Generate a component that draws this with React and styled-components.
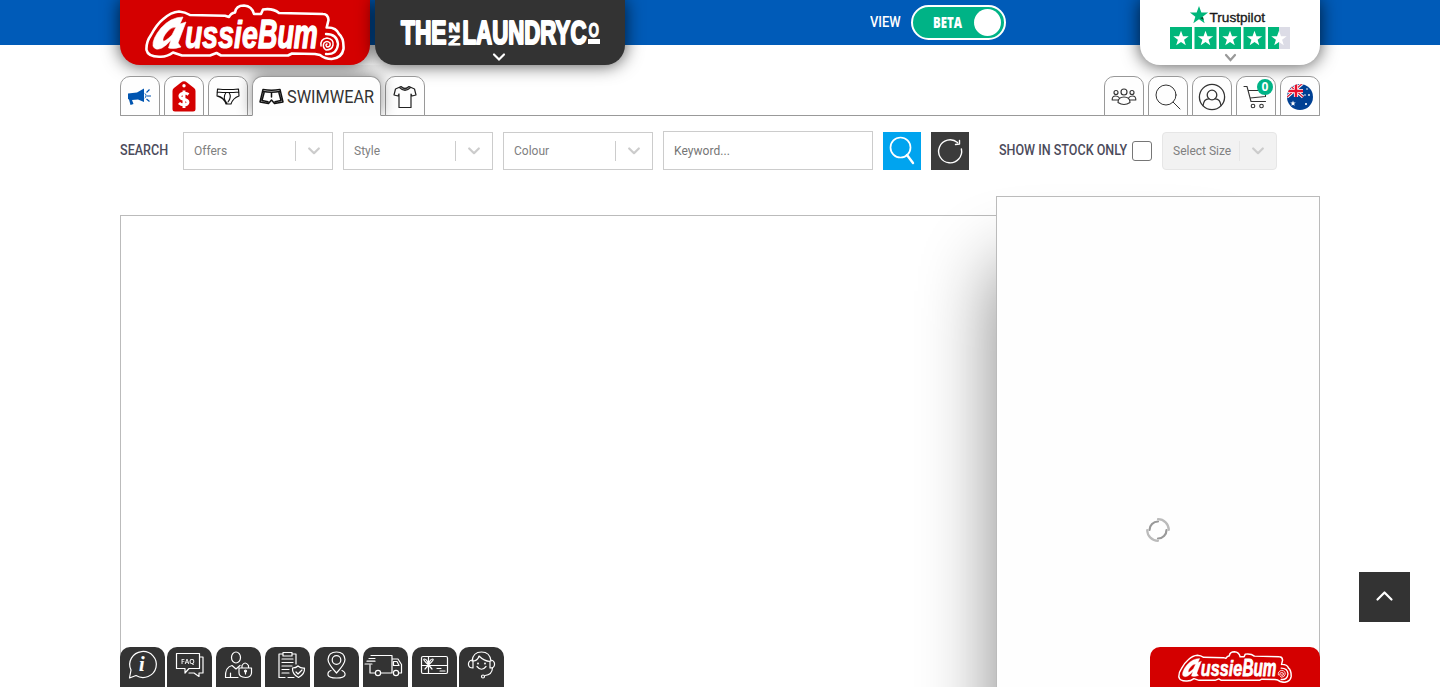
import React from 'react';
import styled, { createGlobalStyle } from 'styled-components';

const Global = createGlobalStyle`
  *, *::before, *::after { box-sizing: border-box; }
  body { margin: 0; background: #fff; font-family: Roboto, "Liberation Sans", sans-serif; color: #333; overflow: hidden; }
  svg { display: block; flex: none; }
`;

const Page = styled.div`
  height: 687px;
  display: flex;
  flex-direction: column;
  overflow: hidden;
`;
const TopBar = styled.header`
  height: 45px;
  flex: none;
  background: #005bb8;
`;
const Container = styled.div`
  width: 1200px;
  margin: 0 auto;
`;
const TopInner = styled(Container)`
  display: flex;
  align-items: flex-start;
`;
const HangingTab = styled.div`
  width: ${p => p.$w}px;
  height: 65px;
  margin-right: ${p => p.$gap || 0}px;
  padding: ${p => p.$pad || 0};
  background: ${p => p.$bg};
  border-radius: 0 0 20px 20px;
  box-shadow: 0 0 18px rgba(0, 0, 0, 0.72);
`;
const Toggle = styled.div`
  display: flex;
  align-items: center;
  height: 45px;
  margin-left: 245px;
  margin-right: 134px;
  color: #fff;
`;
const Switch = styled.div`
  width: 95px;
  height: 35px;
  margin-left: 10px;
  padding: 0 3px 0 20px;
  display: flex;
  align-items: center;
  justify-content: space-between;
  background: #00b386;
  border: 2px solid #fff;
  border-radius: 18px;
`;
const Knob = styled.span`
  width: 27px;
  height: 27px;
  border-radius: 50%;
  background: #fff;
`;
const NavRow = styled(Container)`
  display: flex;
  justify-content: space-between;
  height: 40px;
  margin-top: 31px;
  flex: none;
  border-bottom: 1px solid #999;
  clip-path: inset(-11px -30px 0);
`;
const TabGroup = styled.nav`
  display: flex;
  gap: 4px;
`;
const Tab = styled.a`
  width: ${p => (p.$active ? 129 : 40)}px;
  height: 40px;
  padding-top: 1px;
  display: flex;
  align-items: center;
  justify-content: center;
  gap: 3px;
  position: relative;
  z-index: ${p => (p.$active ? 1 : 0)};
  background: #fefefe;
  border: 1px solid #999;
  border-bottom-color: ${p => (p.$active ? '#fefefe' : '#999')};
  border-radius: 10px 10px 0 0;
  box-shadow: ${p => (p.$active ? '0 -2px 15px rgba(0,0,0,.45)' : 'none')};
`;
const Badge = styled.span`
  position: absolute;
  top: 2px;
  right: 2px;
  width: 16px;
  height: 16px;
  border-radius: 50%;
  background: #00b386;
  color: #fff;
  font: 700 12px/16px "Open Sans", sans-serif;
  text-align: center;
`;
const FilterRow = styled(Container)`
  display: flex;
  align-items: center;
  height: 39px;
  margin-top: 15px;
  flex: none;
`;
const Label = styled.span`
  display: block;
  width: ${p => p.$w}px;
  flex: none;
  font-size: ${p => p.$size || 16}px;
  font-weight: ${p => p.$weight || 500};
  font-family: ${p => p.$font || 'Roboto'}, sans-serif;
  line-height: 20px;
  padding-bottom: ${p => p.$lift || 0}px;
  white-space: nowrap;
  color: ${p => p.$color || '#4c4b5b'};
`;
const Squeeze = styled.span`
  display: inline-block;
  transform: scaleX(${p => p.$x});
  transform-origin: left center;
`;
const Select = styled.div`
  display: flex;
  align-items: center;
  width: ${p => p.$w || 150}px;
  height: 38px;
  margin: 1px 10px 0 0;
  padding-left: 10px;
  border: 1px solid ${p => (p.$disabled ? '#e6e6e6' : '#ccc')};
  border-radius: ${p => (p.$disabled ? 4 : 0)}px;
  background: ${p => (p.$disabled ? '#f2f2f2' : '#fff')};
  font-size: 12px;
  color: #808080;
`;
const SelectText = styled.span`
  flex: 1;
  white-space: nowrap;
`;
const Arrow = styled.span`
  width: 37px;
  height: 20px;
  display: flex;
  align-items: center;
  justify-content: center;
  border-left: 1px solid ${p => (p.$disabled ? '#e6e6e6' : '#ccc')};
`;
const Keyword = styled.div`
  width: 210px;
  height: 39px;
  margin-right: 10px;
  padding-left: 10px;
  border: 1px solid #ccc;
  background: #fff;
  font-size: 12px;
  letter-spacing: 0.05px;
  line-height: 38px;
  color: #757575;
`;
const SquareButton = styled.div`
  width: 38px;
  height: 38px;
  margin: 1px ${p => p.$gap}px 0 0;
  background: ${p => p.$bg};
`;
const Check = styled.span`
  width: 20px;
  height: 20px;
  margin: 1px 10px 0 5px;
  border: 1px solid #767676;
  border-radius: 3px;
  background: #fff;
`;
const Content = styled(Container)`
  display: flex;
  flex: 1;
  margin-top: 26px;
`;
const MainPanel = styled.main`
  flex: 1;
  margin-top: 19px;
  border: solid #bbb;
  border-width: 1px 0 0 1px;
`;
const SidePanel = styled.aside`
  width: 324px;
  height: 668px;
  display: flex;
  align-items: center;
  justify-content: center;
  background: #fefefe;
  border: 1px solid #bbb;
  box-shadow: -50px 20px 75px -50px rgba(0, 0, 0, 0.48);
`;
const Footer = styled.footer`
  position: fixed;
  bottom: 0;
  left: 50%;
  width: 1200px;
  margin-left: -600px;
  display: flex;
`;
const FooterTab = styled.a`
  width: 45px;
  height: 40px;
  margin-right: ${p => p.$gap}px;
  background: #333;
  border-radius: 10px 10px 0 0;
`;
const FooterLogo = styled.div`
  width: 170px;
  height: 40px;
  margin-left: auto;
  padding: 4px 0 0 28px;
  background: #d40000;
  border-radius: 10px 10px 0 0;
`;
const ToTop = styled.button`
  position: fixed;
  right: 30px;
  bottom: 65px;
  width: 51px;
  height: 50px;
  padding: 0;
  border: 0;
  background: #333;
`;
const Line = styled.svg`
  fill: none;
  stroke: ${p => p.$c || '#333'};
  stroke-width: ${p => p.$s || 1.2};
  stroke-linecap: round;
  stroke-linejoin: round;
`;
const BrandText = styled.text`
  font-family: ${p => p.$font || '"Liberation Sans Narrow", "Liberation Sans"'}, sans-serif;
  font-weight: ${p => p.$weight || 700};
  font-style: ${p => (p.$italic ? 'italic' : 'normal')};
  fill: ${p => p.$fill || '#fff'};
  stroke: ${p => p.$fill || '#fff'};
  stroke-width: ${p => p.$stroke || 0};
  stroke-linejoin: round;
`;

const AussieLogo = ({ width }) => (
  <svg width={width} height={width * 0.285} viewBox="0 0 200 57">
    <path d="M1.500 46Q1 38 6 31Q12 20 18 15.300Q26 8 34 7.500Q40 8 45 11L80 11.700L84 13Q86 9 90 8.500Q91 1.500 99 1.500Q107 2 109 10L116 10L118 5.500Q128 4 134 9L178 10Q183 10 183.500 16L181.700 23.500Q191 23 194 30Q199 34 198.500 45Q197 54 186.700 55Q180 55 175 51L170 50L147 49.500L143 51.500L76 51.500L71.500 49L65 51.500L37 51.500L28 48.500Q22 53 15 52.700Q3 53 1.500 46Z" fill="none" stroke="#fff" strokeWidth="2.600" strokeLinejoin="round" />
    <path d="M38 13Q26 13 16 24Q7 35 8 42Q10 47 17 44Q22 41 26 36L23.500 44Q29 45.500 36 43L33 39L41 18L35 20L38 13ZM31 23L27 31Q20 38 18 37Q17 34 22 28Q26 23 31 23Z" fill="#fff" fillRule="evenodd" stroke="#fff" strokeWidth=".6" />
    <g transform="translate(40 43.500) scale(.72 1.200)">
      <BrandText fontSize="33" textLength="101" lengthAdjust="spacingAndGlyphs" $italic $stroke="1">ussie</BrandText>
    </g>
    <g transform="translate(113 43.500) scale(.72 1.200)">
      <BrandText fontSize="34.500" textLength="83" lengthAdjust="spacingAndGlyphs" $italic $stroke="1.3">Bum</BrandText>
    </g>
    <circle cx="182" cy="40" r="7.500" fill="#d40000" />
    <path d="M181 30Q192 30 193 40Q192 51 181 50" fill="none" stroke="#fff" strokeWidth="2.400" strokeLinecap="round" />
    <path d="M176 42Q175 35 182 34Q189 35 188 41Q187 46 181 46Q177 43 179 39Q182 36 185 39Q186 43 182 43Q180 41 182 40" fill="none" stroke="#fff" strokeWidth="1.500" strokeLinecap="round" />
  </svg>
);

const LaundryLogo = () => (
  <svg width="250" height="65" viewBox="0 0 250 65">
    <BrandText x="26" y="44.300" fontSize="32.500" textLength="45.500" lengthAdjust="spacingAndGlyphs" $stroke="2.2">THE</BrandText>
    <BrandText x="73.500" y="31.500" fontSize="13.500" textLength="11.500" lengthAdjust="spacingAndGlyphs" $stroke="1.1">N</BrandText>
    <BrandText x="73.500" y="44.700" fontSize="13.500" textLength="11.500" lengthAdjust="spacingAndGlyphs" $stroke="1.1">Z</BrandText>
    <BrandText x="87.500" y="44.300" fontSize="32.500" textLength="124" lengthAdjust="spacingAndGlyphs" $stroke="2.200">LAUNDRYC</BrandText>
    <BrandText x="213.500" y="36.500" fontSize="21" textLength="10.500" lengthAdjust="spacingAndGlyphs" $stroke="1">O</BrandText>
    <path d="M213 41.500h12" stroke="#fff" strokeWidth="5" />
    <path d="M119 54.500l5 5 5-5" fill="none" stroke="#fff" strokeWidth="2.200" strokeLinecap="round" />
  </svg>
);

const star = 'M0-8L2-2.500L7.700-2.500L3.100 1L4.800 6.500L0 3.200L-4.800 6.500L-3.100 1L-7.700-2.500L-2-2.500Z';
const Trustpilot = () => (
  <svg width="180" height="65" viewBox="0 0 180 65">
    <path d={star} transform="translate(59 15.500) scale(1.180)" fill="#00b67a" />
    <path d="M60 18l3-1 .8 3z" fill="#005128" />
    <BrandText x="69.500" y="21.500" fontSize="13.500" textLength="55.500" lengthAdjust="spacingAndGlyphs" $font='"Liberation Sans"' $weight="400" $fill="#191919" $stroke=".35">Trustpilot</BrandText>
    {[0, 1, 2, 3, 4].map(i => (
      <g key={i} transform={`translate(${30 + i * 24.500} 27)`}>
        <rect width="22" height="22" fill={i === 4 ? '#dcdce6' : '#00b67a'} />
        {i === 4 && <rect width="11" height="22" fill="#00b67a" />}
        <path d={star} transform="translate(11 11.800)" fill="#fff" />
      </g>
    ))}
    <path d="M86 55l4.500 5 4.500-5" fill="none" stroke="#999" strokeWidth="2.200" strokeLinecap="round" />
  </svg>
);

const Megaphone = () => (
  <svg width="24" height="18" viewBox="0 0 24 18">
    <path d="M0 5.500L9 4.500L16 0.500V14L10 11.500L4 12L5.500 16L2.500 17L1 11.500L0 11Z" fill="#0055b0" />
    <path d="M18.500 4.500l3-3M19 8h4M18.500 11l3 2.500" stroke="#0055b0" strokeWidth="1.200" />
    <path d="M16.700 5.500a2.500 2.500 0 010 4.500" fill="none" stroke="#0055b0" />
  </svg>
);
const PriceTag = () => (
  <svg width="24" height="31" viewBox="0 0 24 31">
    <path fillRule="evenodd" d="M9 1.500Q12-.8 15 1.500L22 7Q23.500 8 23.500 10V28Q23.500 30.500 21 30.500H3Q.5 30.500 .5 28V10Q.5 8 2 7ZM12 3a1.700 1.700 0 100 3.400A1.700 1.700 0 0012 3" fill="#d40000" />
    <path d="M16.500 13.500Q14 11.500 10.500 12.500Q7.500 13.500 8 15.700Q8.500 17.700 12 18.200Q16 19 16 21.500Q15.500 24 12 24Q9 24 7 22M12 9.500V27" fill="none" stroke="#fff" strokeWidth="2.900" />
  </svg>
);
const Briefs = () => (
  <Line width="24" height="18" viewBox="0 0 24 18" $c="#111" $s="1.1">
    <path d="M1.500 1Q12 2 22.500 1L23 8Q17 10 15 16H10Q8 10 1 8ZM1 4Q12 5 23 4M10 4.500Q6 10 11 15.500M13 4.500Q16 9 12 14M2 8Q7 9 10 15" />
  </Line>
);
const Trunks = () => (
  <Line width="25" height="17" viewBox="0 0 25 17" $c="#111" $s="1.5">
    <path d="M4 1.500Q12.500 3 21 1.500L24 14L15.500 15.500L12.500 12L9.500 15.500L1 14ZM4 3.500Q12.500 5 21 3.500M5 5L3 12.500L9 13.700M20 5L22 12.500L16 13.700" />
    <path d="M12.500 5v4" />
  </Line>
);
const Shirt = () => (
  <Line width="24" height="24" viewBox="0 0 24 24" $c="#222">
    <path d="M8 1.500L2.500 4L1 10L5 11L6 9V22.500H18V9L19 11L23 10L21.500 4L16 1.500Q12 5.500 8 1.500ZM6.500 2.500Q12 8 17.500 2.500" />
  </Line>
);
const People = () => (
  <Line width="26" height="18" viewBox="0 0 26 18" $s="1.15">
    <circle cx="13" cy="4" r="3" /><circle cx="5" cy="4.500" r="2" /><circle cx="21" cy="4.500" r="2" />
    <path d="M7 14.500Q7 9 13 9Q19 9 19 14.500Q16 16.500 13 16.500Q10 16.500 7 14.500ZM7 12H1.200Q1 8 4.500 8Q7 8 8 9.500M19 12H24.800Q25 8 21.500 8Q19 8 18 9.500" />
  </Line>
);
const SearchIcon = () => (
  <Line width="26" height="26" viewBox="0 0 26 26" $s="1">
    <circle cx="11" cy="11" r="10" /><path d="M18.200 18.200L25 25" />
  </Line>
);
const Account = () => (
  <Line width="28" height="28" viewBox="0 0 28 28" $s="1.3">
    <circle cx="14" cy="14" r="12.600" /><circle cx="14" cy="12" r="4.800" /><path d="M5 22.500Q6 15.500 11 15.800M17 15.800Q22 15.500 23 22.500" />
  </Line>
);
const Cart = () => (
  <Line width="26" height="26" viewBox="0 0 26 26" $s="1.1">
    <path d="M1 2.500H4L8 17.500H22.500M5 6.500H22.500V12.500L7 14" /><circle cx="10" cy="22" r="1.800" /><circle cx="18.500" cy="22" r="1.800" />
  </Line>
);
const Flag = () => (
  <svg width="26" height="26" viewBox="0 0 26 26">
    <defs><clipPath id="flag-round"><circle cx="13" cy="13" r="13" /></clipPath></defs>
    <g clipPath="url(#flag-round)">
      <path fill="#004093" d="M0 0h26v26H0z" />
      <path d="M0-1L16 13M16-1L0 13" stroke="#fff" strokeWidth="3" />
      <path d="M0-1L16 13M16-1L0 13" stroke="#d8102c" strokeWidth="1.200" />
      <path d="M9 0V13M0 7H16" stroke="#fff" strokeWidth="4.200" />
      <path d="M9 0V13M0 7H16" stroke="#e8112d" strokeWidth="2.500" />
      <path d={star} transform="translate(6 19.500) scale(.36)" fill="#fff" />
      <g fill="#fff"><circle cx="18" cy="11" r=".8" /><circle cx="22" cy="11" r=".9" /><circle cx="19" cy="20" r="1.100" /><circle cx="20" cy="5" r=".8" /></g>
    </g>
  </svg>
);

const footerArt = [
  <><path d="M9.500 31L11 23A13.300 13 0 1116 28.500Z" /><BrandText x="19" y="23.800" fontSize="20" $italic $font='"Liberation Serif"' $stroke=".2">i</BrandText></>,
  <><path d="M9.500 6.500H32.500V21.500H22L18 26V21.500H9.500ZM33 10H36V26H32V29.500L27 26H22" /><BrandText x="14" y="16.500" fontSize="6.500" textLength="13.500" lengthAdjust="spacingAndGlyphs" $font='"Open Sans"' $weight="600" $stroke="0">FAQ</BrandText></>,
  <><ellipse cx="20" cy="10.500" rx="4.500" ry="5.500" /><path d="M9.500 30.500Q9 20 16 18.500L20 22L24 18.500M9.500 30.500H22M14.500 26v4M23 21H35.500V26Q35 30.500 29.500 30.500Q23 30 23 26ZM26 21V18.500Q29 13.500 32.500 18.500V21M29.500 24v3" /><circle cx="29.500" cy="24" r="1" /></>,
  <><path d="M18 7H14V30.500H20M23 30.500H29M27 7H31V17M18 5.500H27V9H18ZM17 12H28M17 15.500H28M17 19H27M17 22.500H24M17 26H24M33 19Q36 21.500 39.500 21Q40 27 33.500 30.500Q27 27 27.500 21Q31 21 33 19M31 25l2 2 4-4" /></>,
  <><path d="M22.500 26Q14 17 14 12.500Q14.500 5 22.500 5Q30.500 5 31 12.500Q31 17 22.500 26ZM17 23.500Q13.500 24.500 14 28Q15 31 22.500 31Q30 31 31 28Q31.500 25 28 23.500" /><circle cx="22.500" cy="13" r="4.300" /></>,
  <><path d="M8 8.500H29V26H18M29 12H35L38.500 17.500V26H36M30.500 14.500H34L36 18.500H30.500ZM2 17H9M6 11.500H12M4 14.200H12M7 18V26H12" /><circle cx="15" cy="26" r="2.600" /><circle cx="33" cy="26" r="2.600" /></>,
  <><rect x="9.500" y="9.500" width="26" height="17" rx="1.500" /><path d="M9.500 18.500H35.500M16.500 9.500V26.500M16.500 18Q10 12 12.500 12Q15 12 16.500 18ZM16.500 18Q18 12 20.500 12Q23 12 16.500 18ZM16.500 18L13 22M16.500 18L20 22M25 21.500H29M28 24H33" /></>,
  <><path d="M13 14Q14 5 22.500 5Q31 5 32 14M15 14Q19 13 20 9Q25 14 31 14.500M13 13Q9 14 9.500 18Q10 21 14 21V13M32 13Q36 14 35.500 18Q35 21 31 21V14M33.500 21Q33 28 26 28.500M18 19.500Q22.500 25 27 19.500" /><circle cx="24" cy="29.500" r="1.500" /><circle cx="19" cy="16.500" r=".4" /><circle cx="26" cy="16.500" r=".4" /></>,
];
const footerGaps = [2, 4, 4, 4, 4, 4, 2, 0];

const Chevron = () => (
  <Line width="12" height="8" viewBox="0 0 12 8" $c="#ccc" $s="2.2"><path d="M1.200 1.500L6 6.200L10.800 1.500" /></Line>
);
const Dropdown = ({ text, width, disabled }) => (
  <Select $w={width} $disabled={disabled}>
    <SelectText>{text}</SelectText>
    <Arrow $disabled={disabled}><Chevron /></Arrow>
  </Select>
);

export default function App() {
  return (
    <Page>
      <Global />
      <TopBar>
        <TopInner>
          <HangingTab $w={250} $gap={5} $bg="#d40000" $pad="4px 0 0 25px"><AussieLogo width={200} /></HangingTab>
          <HangingTab $w={250} $bg="#333"><LaundryLogo /></HangingTab>
          <Toggle>
            <Label $w={31} $size={15} $weight={500} $color="#fff" $lift={1}><Squeeze $x={0.86}>VIEW</Squeeze></Label>
            <Switch>
              <Label $w={30} $size={15} $weight={800} $font='"Open Sans"' $color="#fff" $lift={1}><Squeeze $x={0.76}>BETA</Squeeze></Label>
              <Knob />
            </Switch>
          </Toggle>
          <HangingTab $w={180} $bg="#fff"><Trustpilot /></HangingTab>
        </TopInner>
      </TopBar>
      <NavRow>
        <TabGroup>
          <Tab><Megaphone /></Tab>
          <Tab><PriceTag /></Tab>
          <Tab><Briefs /></Tab>
          <Tab $active><Trunks /><Label $w={87} $size={18} $weight={450} $color="#333"><Squeeze $x={0.905}>SWIMWEAR</Squeeze></Label></Tab>
          <Tab><Shirt /></Tab>
        </TabGroup>
        <TabGroup>
          <Tab><People /></Tab>
          <Tab><SearchIcon /></Tab>
          <Tab><Account /></Tab>
          <Tab><Cart /><Badge>0</Badge></Tab>
          <Tab><Flag /></Tab>
        </TabGroup>
      </NavRow>
      <FilterRow>
        <Label $w={63} $size={15} $lift={2}><Squeeze $x={0.84}>SEARCH</Squeeze></Label>
        <Dropdown text="Offers" />
        <Dropdown text="Style" />
        <Dropdown text="Colour" />
        <Keyword>Keyword...</Keyword>
        <SquareButton $bg="#00a4ef" $gap={10}>
          <Line width="38" height="38" $c="#fff" $s="1.7"><circle cx="17.500" cy="15.500" r="10" /><path d="M24 23L30 31" strokeWidth="2.400" /></Line>
        </SquareButton>
        <SquareButton $bg="#3b3b3b" $gap={30}>
          <Line width="38" height="38" $c="#fff" $s="1.4"><path d="M26.500 10.500A11.500 11.500 0 1030.400 17M24.500 12.500L28.500 12V8.500" /></Line>
        </SquareButton>
        <Label $w={128} $size={15} $lift={2}><Squeeze $x={0.835}>SHOW IN STOCK ONLY</Squeeze></Label>
        <Check />
        <Dropdown text="Select Size" width={115} disabled />
      </FilterRow>
      <Content>
        <MainPanel />
        <SidePanel>
          <Line width="24" height="24" viewBox="0 0 24 24" $c="#bbb" $s="2.2">
            <path d="M12 1.200A10.800 10.800 0 0122.800 12M12 22.800A10.800 10.800 0 011.200 12" />
            <path d="M12 3.500A8.500 8.500 0 003.500 12M12 20.500A8.500 8.500 0 0020.500 12" stroke="#999" />
          </Line>
        </SidePanel>
      </Content>
      <Footer>
        {footerArt.map((art, i) => (
          <FooterTab key={i} $gap={footerGaps[i]}><Line width="45" height="40" $c="#fff" $s="1.2">{art}</Line></FooterTab>
        ))}
        <FooterLogo><AussieLogo width={114} /></FooterLogo>
      </Footer>
      <ToTop aria-label="Back to top">
        <Line width="51" height="50" $c="#fff" $s="2.2"><path d="M18.500 27.500L25.500 20.500L32.500 27.500" /></Line>
      </ToTop>
    </Page>
  );
}
